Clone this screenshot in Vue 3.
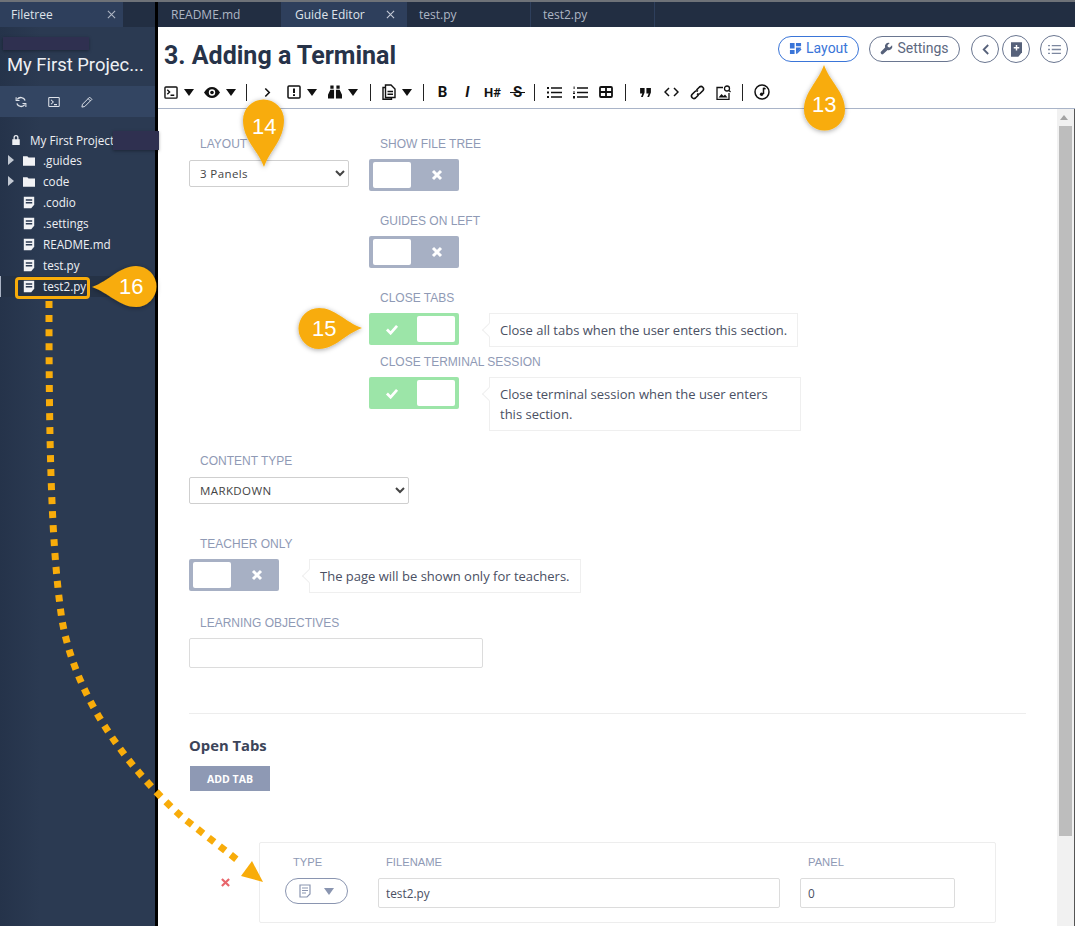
<script setup>
const tree = [
  { name: '.guides', folder: true },
  { name: 'code', folder: true },
  { name: '.codio' },
  { name: '.settings' },
  { name: 'README.md' },
  { name: 'test.py' },
  { name: 'test2.py', active: true }
]

const tabs = [
  { name: 'README.md' },
  { name: 'Guide Editor', active: true },
  { name: 'test.py' },
  { name: 'test2.py' }
]
</script>

<template>
  <div class="page">
    <aside class="sidebar">
      <div class="side-tabs">
        <div class="side-tab">
          <span>Filetree</span>
          <svg class="tab-x" viewBox="0 0 10 10" width="9" height="9"><path d="M1 1l8 8M9 1l-8 8" stroke="#aeb6c4" stroke-width="1.2" /></svg>
        </div>
      </div>
      <h2 class="project">My First Projec...</h2>
      <div class="side-tools">
        <svg viewBox="0 0 16 16" width="12" height="12" fill="none" stroke="#dfe3ea" stroke-width="1.8"><path d="M13.5 6A6 6 0 0 0 3 4.5M2.5 10A6 6 0 0 0 13 11.5" /><path d="M1.5 1.5V6H6M14.5 14.5V10H10" stroke-width="1.4" /></svg>
        <svg viewBox="0 0 16 16" width="12" height="12" fill="none" stroke="#dfe3ea" stroke-width="1.4"><rect x="1" y="2" width="14" height="12" rx="1" /><path d="M4 5l3 3-3 3M8 11.5h4" /></svg>
        <svg viewBox="0 0 16 16" width="12" height="12" fill="none" stroke="#dfe3ea" stroke-width="1.3"><path d="M11.5 1.500l3 3-9.500 9.500-3.800.8.800-3.800z" /><path d="M9.500 3.500l3 3" /></svg>
      </div>
      <ul class="tree">
        <li class="tree-root">
          <svg viewBox="0 0 12 14" width="10" height="12" fill="#eef0f4"><path d="M3 6V4a3 3 0 0 1 6 0v2h1.500v7h-9V6zm1.500 0h3V4a1.500 1.500 0 0 0-3 0z" /></svg>
          <span>My First Project</span>
        </li>
        <li v-for="item in tree" :key="item.name" :class="['tree-row', { active: item.active }]">
          <i v-if="item.folder" class="arrow"></i>
          <svg v-if="item.folder" class="ic" viewBox="0 0 14 12" width="12" height="11" fill="#f1f2f5"><path d="M0 1h5l1.500 1.500H14V12H0z" /></svg>
          <svg v-else class="ic file" viewBox="0 0 12 13" width="12" height="13"><path d="M.8.8h10.400v8L8.200 12.200H.8z" fill="#f1f2f5" /><path d="M2.800 4h6.400M2.800 6.700h6.400" stroke="#2b3a52" stroke-width="1.500" /></svg>
          <span>{{ item.name }}</span>
        </li>
      </ul>
    </aside>

    <main class="main">
      <nav class="tabs">
        <div v-for="tab in tabs" :key="tab.name" :class="['tab', { active: tab.active }]">
          <span>{{ tab.name }}</span>
          <svg v-if="tab.active" class="tab-x" viewBox="0 0 10 10" width="9" height="9"><path d="M1 1l8 8M9 1l-8 8" stroke="#c4cad6" stroke-width="1.200" /></svg>
        </div>
      </nav>

      <header class="head">
        <h1>3. Adding a Terminal</h1>
        <div class="head-actions">
          <button class="pill primary">
            <svg viewBox="0 0 14 14" width="13" height="13" fill="#3a75d8"><path d="M1 1h5v6H1zM7.500 1H13v3.500H7.500zM1 8.500h5V13H1zM7.500 6H13v.5L8 12H7.500z" /><path d="M13.500 8l-4.500 4.500-1.500.5.500-1.500L12.500 7z" /></svg>
            Layout
          </button>
          <button class="pill">
            <svg viewBox="0 0 14 14" width="13" height="13" fill="#56617a"><path d="M13 3.500L10.500 6 8.500 5.500 8 3.500 10.500 1A3.800 3.800 0 0 0 5.500 5.800L1 10.500a1.800 1.800 0 0 0 2.500 2.500L8.200 8.500A3.800 3.800 0 0 0 13 3.500z" /></svg>
            Settings
          </button>
          <div class="circles">
            <button class="circle">
              <svg viewBox="0 0 10 14" width="9" height="13" fill="none" stroke="#56617a" stroke-width="2"><path d="M8 2L3 7l5 5" /></svg>
            </button>
            <button class="circle">
              <svg viewBox="0 0 12 16" width="11" height="15"><path d="M0 0h12v11l-4 5H0z" fill="#56617a" /><path d="M6 3v6M3 6h6" stroke="#fff" stroke-width="1.600" /></svg>
            </button>
            <button class="circle last">
              <svg viewBox="0 0 14 12" width="13" height="11" fill="#7c879f"><path d="M0 1h2v1.500H0zM4 1h10v1.500H4zM0 5.200h2v1.500H0zM4 5.200h10v1.500H4zM0 9.500h2V11H0zM4 9.500h10V11H4z" /></svg>
            </button>
          </div>
        </div>
      </header>

      <div class="toolbar">
        <span class="tool wide">
          <svg viewBox="0 0 15 14" width="14" height="13" fill="none" stroke="#111" stroke-width="1.500"><rect x="1" y="1" width="13" height="12" rx="1" /><path d="M3.500 4l2.500 2.500-2.500 2.500M7 10h4" /></svg>
          <i class="caret"></i>
        </span>
        <span class="tool wide">
          <svg viewBox="0 0 16 11" width="16" height="11"><path d="M0 5.500C2.500 1.500 5 0 8 0s5.500 1.500 8 5.500C13.500 9.500 11 11 8 11S2.500 9.500 0 5.500z" fill="#111" /><circle cx="8" cy="5.500" r="3.200" fill="#fff" /><circle cx="8" cy="5.500" r="1.800" fill="#111" /></svg>
          <i class="caret"></i>
        </span>
        <i class="sep"></i>
        <span class="tool solo">
          <svg viewBox="0 0 8 12" width="7" height="11" fill="none" stroke="#111" stroke-width="1.800"><path d="M1.500 1.500L6 6l-4.500 4.500" /></svg>
        </span>
        <span class="tool wide">
          <svg viewBox="0 0 14 14" width="14" height="14" fill="none" stroke="#111" stroke-width="1.500"><rect x="1" y="1" width="12" height="12" rx="1" /><path d="M7 3.500v4.500M7 9.300v1.700" stroke-width="2" /></svg>
          <i class="caret"></i>
        </span>
        <span class="tool wide">
          <svg viewBox="0 0 15 14" width="14" height="14" fill="#111"><path d="M2.500 0H6v3.500H2.500zM9 0h3.500v3.500H9zM2.500 4.500H6.500V14H0v-4zM8.500 4.500h4L15 10v4H8.500z" /></svg>
          <i class="caret"></i>
        </span>
        <i class="sep"></i>
        <span class="tool wide">
          <svg viewBox="0 0 14 16" width="14" height="16" fill="none" stroke="#111" stroke-width="1.400"><path d="M3.500 1H9l4 4v8.500H3.500zM3.500 3.500H1V15.300h8.500V13.500M5.500 7.500h5.500M5.500 10.300h5.500" /></svg>
          <i class="caret"></i>
        </span>
        <i class="sep before-text"></i>
        <span class="tool txt">B</span>
        <span class="tool txt ital">I</span>
        <span class="tool txt small">H#</span>
        <span class="tool txt"><span class="strike">S</span></span>
        <i class="sep tight first"></i>
        <span class="tool">
          <svg viewBox="0 0 15 13" width="15" height="13" fill="#111"><path d="M0 1h2v2H0zM4 1.300h11v1.400H4zM0 5.500h2v2H0zM4 5.800h11v1.400H4zM0 10h2v2H0zM4 10.300h11v1.400H4z" /></svg>
        </span>
        <span class="tool">
          <svg viewBox="0 0 15 13" width="15" height="13" fill="#111"><path d="M.6.500h1v2.500h-1zM0 5.500h2v1H0zM0 7h2v1H0zM0 10h2v2.500H0zM4 1.300h11v1.400H4zM4 5.800h11v1.400H4zM4 10.300h11v1.400H4z" /></svg>
        </span>
        <span class="tool">
          <svg viewBox="0 0 14 12" width="14" height="12" fill="none" stroke="#111" stroke-width="1.800"><rect x="1" y="1" width="12" height="10" rx="1" /><path d="M1 6h12M7 1v10" /></svg>
        </span>
        <i class="sep tight"></i>
        <span class="tool">
          <svg viewBox="0 0 12 10" width="11" height="9" fill="#111"><path d="M0 0h5v5L3 10H1l1.500-4H0zM7 0h5v5l-2 5H8l1.500-4H7z" /></svg>
        </span>
        <span class="tool">
          <svg viewBox="0 0 15 10" width="15" height="10" fill="none" stroke="#111" stroke-width="1.500"><path d="M5 1L1 5l4 4M10 1l4 4-4 4" /></svg>
        </span>
        <span class="tool">
          <svg viewBox="0 0 15 15" width="15" height="15" fill="none" stroke="#111" stroke-width="1.600"><path d="M6.500 5L9.500 2a2.500 2.500 0 0 1 3.500 3.500L10 8.500a2.500 2.500 0 0 1-3 .3M8.500 10l-3 3A2.500 2.500 0 0 1 2 9.500L5 6.500a2.500 2.500 0 0 1 3-.3" /></svg>
        </span>
        <span class="tool">
          <svg viewBox="0 0 15 15" width="15" height="15" fill="none" stroke="#111" stroke-width="1.300"><path d="M7 2.500H1v12h12V8" /><path d="M2.500 12.500l3-3.500 2 2 1.500-1.500 2.500 3z" fill="#111" stroke="none" /><circle cx="11" cy="3.500" r="2.500" /><path d="M13 5.500l1.500 1.500" /></svg>
        </span>
        <i class="sep tight"></i>
        <span class="tool">
          <svg viewBox="0 0 16 16" width="16" height="16" fill="none" stroke="#111" stroke-width="1.500"><circle cx="8" cy="8" r="7" /><path d="M9.500 3.800V10" /><circle cx="7.600" cy="10.300" r="1.700" fill="#111" stroke="none" /><path d="M9.500 4l2 1" /></svg>
        </span>
      </div>

      <div class="body">
        <div class="form">
          <div class="form-top">
            <div class="col-layout">
              <label class="lbl">Layout</label>
              <select class="select"><option>3 Panels</option></select>
            </div>
            <div class="col-toggles">
              <label class="lbl">Show file tree</label>
              <div class="switch off"><b></b><svg viewBox="0 0 12 12" width="12" height="12"><path d="M2 2l8 8M10 2l-8 8" stroke="#fff" stroke-width="3" /></svg></div>
              <label class="lbl mt">Guides on left</label>
              <div class="switch off"><b></b><svg viewBox="0 0 12 12" width="12" height="12"><path d="M2 2l8 8M10 2l-8 8" stroke="#fff" stroke-width="3" /></svg></div>
              <label class="lbl mt">Close tabs</label>
              <div class="with-hint">
                <div class="switch on"><svg viewBox="0 0 14 12" width="14" height="11"><path d="M1.500 6l4 4 7-8" fill="none" stroke="#fff" stroke-width="3" /></svg><b></b></div>
                <p class="hint">Close all tabs when the user enters this section.</p>
              </div>
              <label class="lbl mt-s">Close terminal session</label>
              <div class="with-hint">
                <div class="switch on"><svg viewBox="0 0 14 12" width="14" height="11"><path d="M1.500 6l4 4 7-8" fill="none" stroke="#fff" stroke-width="3" /></svg><b></b></div>
                <p class="hint two">Close terminal session when the user enters this section.</p>
              </div>
            </div>
          </div>

          <label class="lbl sec-content">Content type</label>
          <select class="select content"><option>MARKDOWN</option></select>

          <label class="lbl sec-teacher">Teacher only</label>
          <div class="with-hint teacher">
            <div class="switch off"><b></b><svg viewBox="0 0 12 12" width="12" height="12"><path d="M2 2l8 8M10 2l-8 8" stroke="#fff" stroke-width="3" /></svg></div>
            <p class="hint">The page will be shown only for teachers.</p>
          </div>

          <label class="lbl sec-obj">Learning objectives</label>
          <input class="field objectives" type="text" />

          <hr class="rule" />

          <h3 class="open-tabs">Open Tabs</h3>
          <button class="add-tab">ADD TAB</button>

          <div class="tab-row">
            <svg class="remove" viewBox="0 0 10 10" width="9" height="9"><path d="M1 1l8 8M9 1l-8 8" stroke="#e8666c" stroke-width="2.400" /></svg>
            <div class="tab-card">
              <div class="tc-col tc-type">
                <label class="lbl">Type</label>
                <div class="type-pill">
                  <svg viewBox="0 0 12 14" width="12" height="14" fill="none" stroke="#8a95b0" stroke-width="1.200"><path d="M1 1h10v9l-3 3H1zM3 4h6M3 6.500h6M3 9h4" /></svg>
                  <i class="caret soft"></i>
                </div>
              </div>
              <div class="tc-col tc-file">
                <label class="lbl">Filename</label>
                <input class="field" type="text" value="test2.py" />
              </div>
              <div class="tc-col tc-panel">
                <label class="lbl">Panel</label>
                <input class="field" type="text" value="0" />
              </div>
            </div>
          </div>
        </div>
        <div class="scrollbar">
          <i class="sb-up"></i>
          <div class="sb-thumb"></div>
        </div>
      </div>
    </main>

    <!-- annotations drawn on top of the screenshot -->
    <i class="redact r1"></i>
    <i class="redact r2"></i>
    <div class="mark"></div>
    <svg class="overlay" viewBox="0 0 1075 926" width="1075" height="926">
      <defs>
        <filter id="sh" x="-30%" y="-30%" width="160%" height="160%">
          <feDropShadow dx="0" dy="1" stdDeviation="2.500" flood-color="#000" flood-opacity=".35" />
        </filter>
      </defs>
      <path d="M49 301C49 420 50 540 62 620C76 700 130 770 182 817L240 862" fill="none" stroke="#f8ac0a" stroke-width="7" stroke-dasharray="7 7" />
      <path d="M263 882L241 876L252 861z" fill="#f8ac0a" />
      <g fill="#f8ac0a" filter="url(#sh)">
        <path d="M264 167C258 150 243 140 243 120a20.500 20.500 0 0 1 41 0C284 140 270 150 264 167z" />
        <path d="M824 65C830 82 845 92 845 110a20.500 20.500 0 0 1-41 0C804 92 818 82 824 65z" />
        <path d="M362 328C345 334 335 349 319 349a20.500 20.500 0 0 1 0-41C335 308 345 322 362 328z" />
        <path d="M92 287C109 281 120 266 136 266a20.500 20.500 0 0 1 0 41C120 307 109 293 92 287z" />
      </g>
    </svg>
    <span class="num n14">14</span>
    <span class="num n13">13</span>
    <span class="num n15">15</span>
    <span class="num n16">16</span>
  </div>
</template>

<style>
html, body {
  margin: 0;
  background: #fff;
}
</style>

<style scoped>
.page {
  position: relative;
  display: flex;
  width: 1075px;
  height: 926px;
  overflow: hidden;
  background: #000;
  box-sizing: border-box;
  border-top: 2px solid #6e7278;
  font-family: "Open Sans", sans-serif;
  color: #3c4459;
}

.sidebar {
  width: 155px;
  flex: none;
  background: linear-gradient(90deg, #25334a 0, #2b3a52 40px);
  color: #eef0f4;
}

.side-tabs {
  height: 25px;
  background: #222e42;
}

.side-tab {
  display: flex;
  align-items: center;
  justify-content: space-between;
  width: 123px;
  height: 25px;
  padding: 0 7px 0 11px;
  box-sizing: border-box;
  background: #2e3f5c;
  font-size: 12px;
  color: #dfe3ea;
}

.project {
  margin: 0;
  height: 59px;
  padding: 26px 0 0 7px;
  box-sizing: border-box;
  font: 400 18.400px/24px Roboto, sans-serif;
  white-space: nowrap;
  letter-spacing: 0;
}

.side-tools {
  display: flex;
  align-items: center;
  gap: 21px;
  height: 31px;
  padding-left: 15px;
  background: #334562;
}

.tree {
  list-style: none;
  margin: 0;
  padding: 13px 0 0;
  font: 400 11.700px/21px "Open Sans", sans-serif;
}

.tree-root {
  display: flex;
  align-items: center;
  gap: 9px;
  height: 20px;
  padding-left: 11px;
  white-space: nowrap;
}

.tree-row {
  position: relative;
  display: flex;
  align-items: center;
  height: 21px;
  padding-left: 23px;
  gap: 8px;
}

.tree-row.active {
  background: #253246;
  box-shadow: inset 1px 0 0 #aab3c4;
}

.arrow {
  position: absolute;
  left: 8px;
  top: 5px;
  border-left: 6px solid #c2c8d2;
  border-top: 5.500px solid transparent;
  border-bottom: 5.500px solid transparent;
}

.main {
  display: flex;
  flex-direction: column;
  width: 917px;
  margin-left: 3px;
  background: #fff;
  flex: none;
}

.tabs {
  display: flex;
  height: 25px;
  background: #222e42;
  flex: none;
}

.tab {
  display: flex;
  align-items: center;
  justify-content: space-between;
  width: 124px;
  padding: 0 12px 0 12px;
  box-sizing: border-box;
  font-size: 12px;
  color: #aeb6c4;
  border-right: 1px solid #2e3f5c;
}

.tab:first-child {
  padding-left: 13px;
}

.tab.active {
  background: #2e3f5c;
  color: #dfe3ea;
  width: 125px;
  padding-left: 13px;
  border: 0;
}

.head {
  display: flex;
  justify-content: space-between;
  height: 55px;
  flex: none;
  padding: 8px 7px 0 6px;
  box-sizing: border-box;
}

.head h1 {
  margin: 0;
  padding-top: 5px;
  font: 700 25px/32px Roboto, sans-serif;
  color: #273349;
}

.head-actions {
  display: flex;
  align-items: flex-start;
  gap: 10px;
  padding-top: 1px;
}

.pill {
  display: flex;
  align-items: center;
  justify-content: center;
  gap: 4px;
  height: 26px;
  padding: 0 10px 2px;
  border: 1px solid #6a7690;
  border-radius: 13px;
  background: #fff;
  font: 400 14px Roboto, sans-serif;
  color: #5d6880;
}

.pill.primary {
  width: 81px;
  border-color: #3a75d8;
  color: #3a75d8;
}

.pill:not(.primary) {
  width: 91px;
}

.circles {
  display: flex;
  gap: 3px;
  margin-top: -1px;
  margin-left: 1px;
}

.circle {
  display: flex;
  align-items: center;
  justify-content: center;
  width: 28px;
  height: 28px;
  padding: 0;
  border: 1px solid #6a7690;
  border-radius: 50%;
  background: #fff;
}

.circle.last {
  margin-left: 7px;
}

.toolbar {
  display: flex;
  align-items: center;
  flex: none;
  height: 20px;
  padding: 0 0 6px 6px;
  border-bottom: 1px solid #a9b4c8;
  color: #111;
}

.tool {
  display: flex;
  align-items: center;
  justify-content: center;
  width: 26px;
  height: 20px;
  flex: none;
}

.tool.wide {
  justify-content: flex-start;
  gap: 6px;
  width: 41px;
}

.tool.wide:first-child {
  width: 40px;
}

.tool.solo {
  width: 18px;
  margin-right: 11px;
}

.tool.txt {
  width: 25px;
  font: 700 15px Roboto, sans-serif;
  color: #111;
}

.tool.txt.ital {
  font-style: italic;
}

.tool.txt.small {
  font-size: 13px;
}

.strike {
  position: relative;
  display: block;
}

.strike::after {
  content: "";
  position: absolute;
  left: -3px;
  right: -3px;
  top: 9px;
  height: 1px;
  background: #111;
}

.caret {
  width: 0;
  height: 0;
  border-left: 5.500px solid transparent;
  border-right: 5.500px solid transparent;
  border-top: 7px solid #111;
}

.caret.soft {
  border-top-color: #8a95b0;
}

.sep {
  flex: none;
  width: 1px;
  height: 17px;
  margin: 0 11px 0 1px;
  background: #222;
}

.sep.before-text {
  margin: 0 6px 0 0;
}

.sep.tight {
  margin: 0 6px;
}

.sep.tight.first {
  margin-left: 4px;
}

.body {
  position: relative;
  flex: 1;
  min-height: 0;
  display: flex;
}

.form {
  flex: 1;
  padding: 0 0 0 31px;
  min-width: 0;
}

.form-top {
  display: flex;
  gap: 20px;
}

.col-layout {
  width: 160px;
}

.lbl {
  display: block;
  height: 16px;
  font: 400 12px/16px "Liberation Sans", sans-serif;
  color: #8f9ab5;
  text-transform: uppercase;
  padding-left: 11px;
}

.col-layout .lbl,
.col-toggles > .lbl:first-child {
  margin-top: 27px;
  margin-bottom: 8px;
}

.col-toggles > .lbl:first-child {
  margin-bottom: 7px;
}

.col-toggles .lbl {
  margin-bottom: 7px;
}

.lbl.mt {
  margin-top: 22px;
}

.lbl.mt-s {
  margin-top: 7px;
  margin-bottom: 7px;
}

.select {
  display: block;
  width: 160px;
  height: 27px;
  padding: 0 0 0 6px;
  margin-top: 7px;
  border: 1px solid #cfcfcf;
  border-radius: 2px;
  background: #fff;
  font: 400 11.500px "Open Sans", sans-serif;
  letter-spacing: .4px;
  color: #444;
}

.select.content {
  width: 220px;
  margin-top: 0;
}

.switch {
  display: flex;
  align-items: center;
  justify-content: space-between;
  width: 90px;
  height: 32px;
  padding: 3px 4px;
  box-sizing: border-box;
  flex: none;
  border-radius: 2px;
}

.switch b {
  display: block;
  width: 38px;
  height: 26px;
  background: #fff;
  border-radius: 2px;
}

.switch.off {
  background: #a7b0c4;
  padding-right: 16px;
}

.switch.on {
  background: #9ce5a8;
  padding-left: 16px;
}

.with-hint {
  display: flex;
  align-items: flex-start;
  gap: 30px;
}

.hint {
  position: relative;
  margin: 0;
  padding: 6px 10px 6px 10px;
  border: 1px solid #efefef;
  background: #fff;
  font-size: 13px;
  line-height: 20px;
  color: #4a5063;
  white-space: nowrap;
}

.hint::before {
  content: "";
  position: absolute;
  left: -6px;
  top: 11px;
  width: 9px;
  height: 9px;
  background: #fff;
  border-left: 1px solid #efefef;
  border-bottom: 1px solid #efefef;
  transform: rotate(45deg);
}

.hint.two {
  width: 290px;
  white-space: normal;
  padding: 6px 10px 6px;
}

.lbl.sec-content {
  margin: 22px 0 8px;
}

.lbl.sec-teacher {
  margin: 32px 0 7px;
}

.lbl.sec-obj {
  margin: 22px 0 7px;
}

.teacher {
  min-height: 32px;
}

.field {
  display: block;
  width: 100%;
  height: 30px;
  padding: 0 7px;
  box-sizing: border-box;
  border: 1px solid #dcdcdc;
  border-radius: 2px;
  background: #fff;
  font: 400 11.800px "Open Sans", sans-serif;
  color: #4a5063;
  outline: none;
}

.objectives {
  width: 294px;
}

.rule {
  width: 837px;
  margin: 45px 0 0;
  border: 0;
  border-top: 1px solid #ededed;
}

.open-tabs {
  margin: 21px 0 11px;
  font: 700 14.800px/20px "Open Sans", sans-serif;
  color: #3c4459;
}

.add-tab {
  display: block;
  width: 80px;
  height: 25px;
  margin-left: 1px;
  padding: 0;
  border: 0;
  background: #8e99b4;
  color: #fff;
  font: 700 10.500px "Open Sans", sans-serif;
}

.tab-row {
  display: flex;
  align-items: center;
  margin-top: 51px;
}

.remove {
  margin-left: 32px;
  margin-top: 0;
  margin-right: 29px;
}

.tab-card {
  display: flex;
  width: 737px;
  height: 81px;
  box-sizing: border-box;
  border: 1px solid #ededed;
  border-radius: 2px;
  padding: 11px 0 0 25px;
}

.tc-col .lbl {
  margin-bottom: 8px;
  padding-left: 8px;
  font-size: 11.200px;
}

.tc-type {
  width: 93px;
}

.tc-file {
  width: 402px;
  margin-right: 20px;
}

.tc-panel {
  width: 155px;
}

.type-pill {
  display: flex;
  align-items: center;
  justify-content: center;
  gap: 13px;
  width: 63px;
  height: 26px;
  box-sizing: border-box;
  margin-top: 2px;
  border: 1px solid #8a95b0;
  border-radius: 13px;
}

.scrollbar {
  position: relative;
  width: 18px;
  flex: none;
  background: #f1f1f1;
  border-right: 1px solid #555;
  box-sizing: border-box;
}

.sb-up {
  position: absolute;
  left: 3px;
  top: 6px;
  border-left: 4px solid transparent;
  border-right: 4px solid transparent;
  border-bottom: 5px solid #a3a3a3;
}

.sb-thumb {
  position: absolute;
  top: 17px;
  left: 2px;
  width: 13px;
  height: 710px;
  background: #bdbdbd;
}

.redact {
  position: absolute;
  background: #2f3050;
  box-shadow: 0 1px 3px rgba(0, 0, 0, .35);
}

.r1 {
  left: 3px;
  top: 35px;
  width: 86px;
  height: 13px;
}

.r2 {
  left: 113px;
  top: 129px;
  width: 46px;
  height: 19px;
}

.mark {
  position: absolute;
  left: 15px;
  top: 275px;
  width: 75px;
  height: 22px;
  box-sizing: border-box;
  border: 3px solid #f8ac0a;
  border-radius: 4px;
}

.overlay {
  position: absolute;
  left: 0;
  top: -2px;
}

.num {
  position: absolute;
  font: 400 22px/26px "Liberation Sans", sans-serif;
  color: #fff;
}

.n14 { left: 252px; top: 112px; }
.n13 { left: 812px; top: 90px; }
.n15 { left: 312px; top: 314px; }
.n16 { left: 119px; top: 272px; }
</style>
